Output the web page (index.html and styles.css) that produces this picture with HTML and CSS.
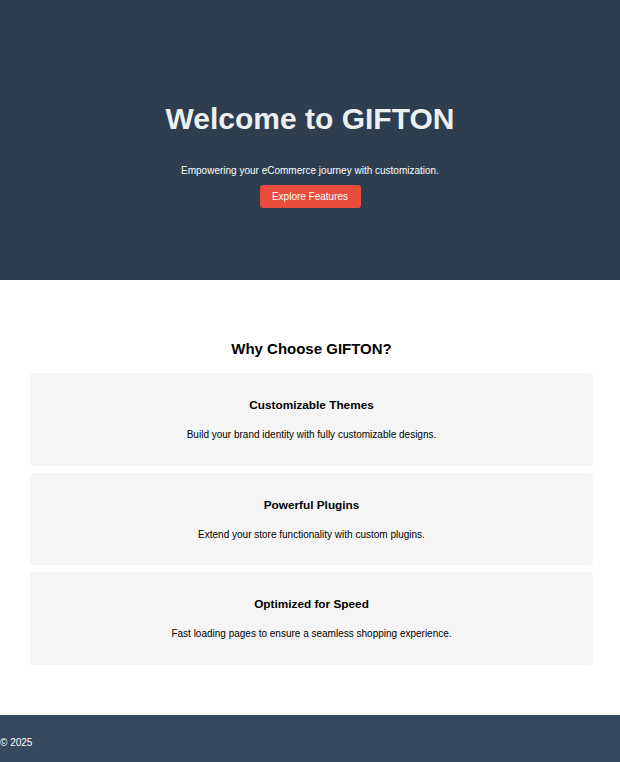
FILE: index.html
```html
<!DOCTYPE html>
<html lang="en">
<head>
<meta charset="utf-8">
<title>GIFTON</title>
<link rel="stylesheet" href="styles.css">
</head>
<body>
<header class="hero">
  <h1 class="hero-title">Welcome to GIFTON</h1>
  <p class="hero-sub">Empowering your eCommerce journey with customization.</p>
  <a class="btn" href="#features">Explore Features</a>
</header>
<section class="features" id="features">
  <h2 class="features-title">Why Choose GIFTON?</h2>
  <div class="card-list">
    <div class="card">
      <h3 class="card-title">Customizable Themes</h3>
      <p class="card-text">Build your brand identity with fully customizable designs.</p>
    </div>
    <div class="card">
      <h3 class="card-title">Powerful Plugins</h3>
      <p class="card-text">Extend your store functionality with custom plugins.</p>
    </div>
    <div class="card">
      <h3 class="card-title">Optimized for Speed</h3>
      <p class="card-text">Fast loading pages to ensure a seamless shopping experience.</p>
    </div>
  </div>
</section>
<footer class="footer">
  <p class="footer-text">&copy; 2025</p>
</footer>
</body>
</html>
```
FILE: styles.css
```css
* { box-sizing: border-box; }
html, body { margin: 0; padding: 0; }
body {
  font-family: "Liberation Sans", Arial, sans-serif;
  color: #000;
  background: #fff;
}
.hero {
  background: #2c3e50;
  color: #ecf0f1;
  height: 280px;
  padding-top: 101px;
  display: flex;
  flex-direction: column;
  align-items: center;
  text-align: center;
}
.hero-title {
  margin: 0;
  font-size: 30px;
  line-height: 35px;
  font-weight: bold;
}
.hero-sub {
  margin: 29px 0 0;
  font-size: 10px;
  line-height: 12px;
  color: #fff;
}
.btn {
  margin-top: 8px;
  display: inline-block;
  width: 101px;
  height: 23px;
  line-height: 23px;
  background: #e74c3c;
  color: #fff;
  font-size: 10px;
  text-decoration: none;
  border-radius: 3px;
}
.features {
  padding: 60px 27px 50px 30px;
}
.features-title {
  margin: 0 0 16px;
  text-align: center;
  font-size: 15px;
  line-height: 17px;
  font-weight: bold;
}
.card-list {
  display: flex;
  flex-direction: column;
  gap: 7px;
}
.card {
  background: #f5f5f5;
  border-radius: 4px;
  height: 92.5px;
  padding: 25px 20px 0;
  text-align: center;
}
.card-title {
  margin: 0;
  font-size: 11.8px;
  line-height: 14px;
  font-weight: bold;
}
.card-text {
  margin: 17px 0 0;
  font-size: 10px;
  line-height: 12px;
}
.footer {
  background: #34495e;
  color: #fff;
  height: 48px;
  padding-top: 22px;
}
.footer-text {
  margin: 0;
  font-size: 10px;
  line-height: 12px;
}
```
